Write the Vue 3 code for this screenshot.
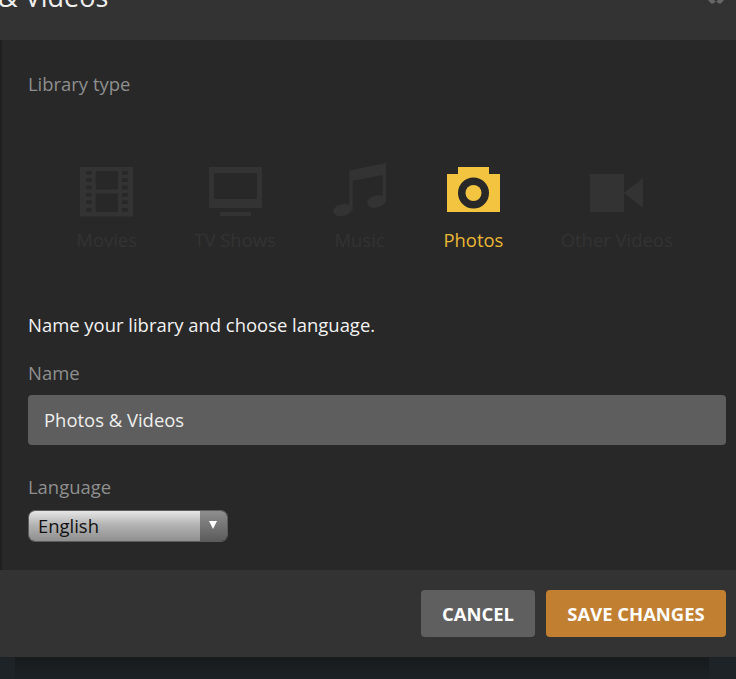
<script setup>
const holes = [4, 11.3, 18.7, 26, 33.3, 41]
</script>

<template>
  <div class="page">
    <div class="modal">
      <header class="head">
        <h1 class="title">&amp; Videos</h1>
        <svg class="close" width="20" height="6" viewBox="0 0 20 6">
          <path d="M2 0h6l2 2 2-2h6l-3 3.500h-2l-3-2-3 2H5z" fill="#666" />
        </svg>
      </header>
      <main class="body">
        <p class="label first">Library type</p>
        <div class="types">
          <div class="type">
            <svg class="icon" width="53" height="50" viewBox="0 0 53 50">
              <path class="shape" fill-rule="evenodd" d="M0 0H53V49.500H0ZM15.700 4V22.500H38V4ZM15.700 26.500V45H38V26.500Z" />
              <g fill="#282828">
                <rect v-for="y in holes" :key="'l' + y" x="6" :y="y" width="5.700" height="3.700" />
                <rect v-for="y in holes" :key="'r' + y" x="42" :y="y" width="5.700" height="3.700" />
              </g>
            </svg>
            <span>Movies</span>
          </div>
          <div class="type">
            <svg class="icon" width="53" height="50" viewBox="0 0 53 50">
              <path class="shape" fill-rule="evenodd" d="M0 0H53V41H0ZM5 6V32H48V6Z" />
              <rect class="shape" x="11" y="45" width="31" height="4" />
            </svg>
            <span>TV Shows</span>
          </div>
          <div class="type">
            <svg class="icon music" width="53" height="54" viewBox="0 0 53 54">
              <path class="shape" d="M53 0 16.300 7.600V47H19.700V17.700L49.700 12V39H53Z" />
              <ellipse class="shape" cx="9.500" cy="47" rx="9.500" ry="6" transform="rotate(-14 9.500 47)" />
              <ellipse class="shape" cx="43.500" cy="38.500" rx="9.500" ry="6" transform="rotate(-14 43.500 38.500)" />
            </svg>
            <span>Music</span>
          </div>
          <div class="type active">
            <svg class="icon" width="53" height="50" viewBox="0 0 53 50">
              <path fill="#f3c440" d="M11 0H42V7H53V45H0V7H11Z" />
              <circle cx="26.500" cy="26" r="15.500" fill="#282828" />
              <circle cx="26.500" cy="26" r="8" fill="#f3c440" />
            </svg>
            <span>Photos</span>
          </div>
          <div class="type">
            <svg class="icon" width="53" height="50" viewBox="0 0 53 50">
              <rect class="shape" x="0" y="7" width="34" height="38" />
              <path class="shape" d="M34 26 53 11V41Z" />
            </svg>
            <span>Other Videos</span>
          </div>
        </div>
        <p class="intro">Name your library and choose language.</p>
        <label class="label name-label">Name</label>
        <div class="input">Photos &amp; Videos</div>
        <label class="label lang-label">Language</label>
        <div class="select">
          <span class="select-text">English</span>
          <span class="select-arrow"><i class="tri"></i></span>
        </div>
      </main>
      <footer class="foot">
        <button class="btn cancel">CANCEL</button>
        <button class="btn save">SAVE CHANGES</button>
      </footer>
    </div>
    <div class="backdrop"><div class="inner"></div></div>
  </div>
</template>

<style>
html, body { margin: 0; background: #1c2024; }
</style>

<style scoped>
.page {
  width: 736px;
  height: 679px;
  overflow: hidden;
  display: flex;
  flex-direction: column;
  font-family: "Open Sans", sans-serif;
  font-size: 18.45px;
}
.modal { height: 657px; display: flex; flex-direction: column; }
.head {
  position: relative;
  height: 40px;
  flex: none;
  overflow: hidden;
  background: #333;
}
.title {
  margin: -23px 0 0 -2px;
  font-size: 27px;
  line-height: 40px;
  font-weight: 400;
  color: #eee;
}
.close { position: absolute; top: 0; left: 706px; }
.body {
  flex: 1;
  background: #282828;
  border-left: 2px solid #1f1f1f;
  padding: 0 10px 0 26px;
  display: flex;
  flex-direction: column;
  align-items: flex-start;
}
.label { margin: 0; color: #8f8f8f; line-height: 24px; display: block; }
.first { margin-top: 32px; }
.types {
  display: flex;
  gap: 57.300px;
  margin: 71px 0 0 48.300px;
  height: 90px;
}
.type {
  display: flex;
  flex-direction: column;
  align-items: center;
  color: #333;
  white-space: nowrap;
  line-height: 24px;
}
.type .icon { display: block; height: 50px; margin-bottom: 11px; }
.type .music { height: 54px; margin-top: -4px; }
.shape { fill: #333; }
.active { color: #e9b834; }
.intro { margin: 56px 0 0; color: #f2f2f2; line-height: 24px; }
.name-label { margin-top: 24px; }
.input {
  margin-top: 10px;
  box-sizing: border-box;
  width: 698px;
  height: 50px;
  line-height: 50px;
  padding-left: 16px;
  background: #5e5e5e;
  border-radius: 4px;
  color: #eee;
}
.lang-label { margin-top: 30px; }
.select {
  margin-top: 11px;
  box-sizing: border-box;
  width: 200px;
  height: 32px;
  display: flex;
  border-radius: 7px;
  border: 1px solid #5c5c5c;
  overflow: hidden;
}
.select-text {
  flex: 1;
  padding-left: 9px;
  line-height: 30px;
  color: #111;
  background: linear-gradient(#e6e6e6, #b4b4b4 45%, #8f8f8f);
}
.select-arrow {
  width: 27px;
  display: flex;
  justify-content: center;
  padding: 10px 2px 0 0;
  box-sizing: border-box;
  background: linear-gradient(#8e8e8e, #5c5c5c);
}
.tri {
  width: 0;
  height: 0;
  border-left: 4.500px solid transparent;
  border-right: 4.500px solid transparent;
  border-top: 8px solid #fff;
}
.foot {
  height: 87px;
  flex: none;
  box-sizing: border-box;
  background: #333;
  padding: 20px 10px 0 0;
  display: flex;
  justify-content: flex-end;
  align-items: flex-start;
  gap: 11px;
}
.btn {
  height: 47px;
  border: 0;
  border-radius: 4px;
  color: #fff;
  font: 700 18.450px "Open Sans", sans-serif;
  padding: 0;
}
.cancel { width: 114px; background: #5f5f5f; }
.save { width: 180px; background: #c17f32; }
.backdrop {
  flex: 1;
  display: flex;
  padding: 0 27px 0 15px;
  background: #1e2327;
}
.inner { flex: 1; background: linear-gradient(#171b1e, #1c2125); }
</style>
